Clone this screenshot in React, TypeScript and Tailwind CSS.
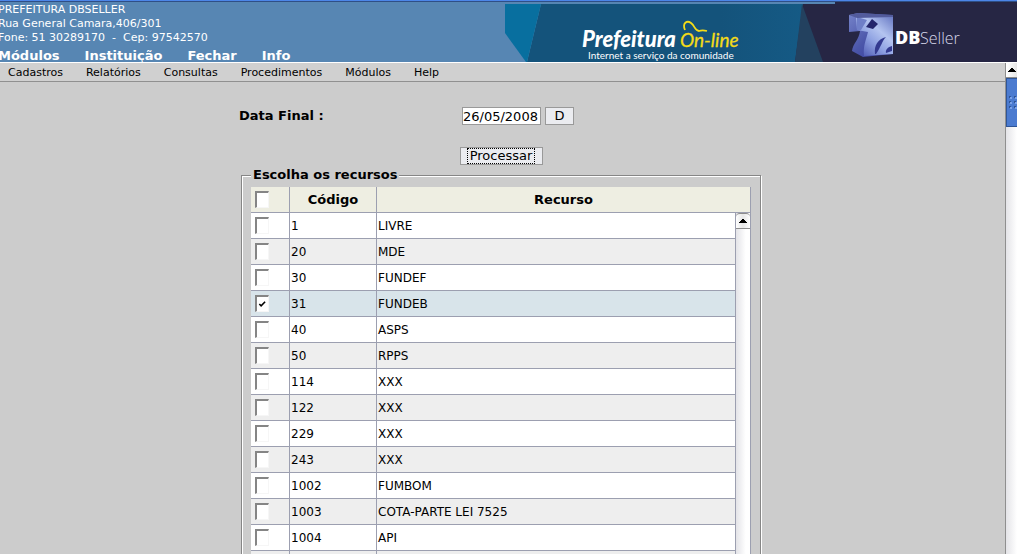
import React, { useState } from 'react';

type Resource = { code: string; name: string };

const resources: Resource[] = [
  { code: '1', name: 'LIVRE' },
  { code: '20', name: 'MDE' },
  { code: '30', name: 'FUNDEF' },
  { code: '31', name: 'FUNDEB' },
  { code: '40', name: 'ASPS' },
  { code: '50', name: 'RPPS' },
  { code: '114', name: 'XXX' },
  { code: '122', name: 'XXX' },
  { code: '229', name: 'XXX' },
  { code: '243', name: 'XXX' },
  { code: '1002', name: 'FUMBOM' },
  { code: '1003', name: 'COTA-PARTE LEI 7525' },
  { code: '1004', name: 'API' },
];

const modules = ['Módulos', 'Instituição', 'Fechar', 'Info'];
const menus = ['Cadastros', 'Relatórios', 'Consultas', 'Procedimentos', 'Módulos', 'Help'];

function Banner() {
  return (
    <svg className="block h-[60px] w-[512px] shrink-0" viewBox="0 2 512 60" role="img" aria-label="Prefeitura On-line, DBSeller">
      <defs>
        <linearGradient id="sea" x1="0" x2="1">
          <stop offset="0" stopColor="#14537b" />
          <stop offset="0.7" stopColor="#14537b" />
          <stop offset="1" stopColor="#155a85" />
        </linearGradient>
        <linearGradient id="front" x1="0.1" y1="1" x2="0.9" y2="0">
          <stop offset="0" stopColor="#4a55b0" />
          <stop offset="0.4" stopColor="#8fa2e2" />
          <stop offset="0.65" stopColor="#b4c4f0" />
          <stop offset="1" stopColor="#6f80c8" />
        </linearGradient>
        <linearGradient id="side" x1="0" y1="0" x2="1" y2="1">
          <stop offset="0" stopColor="#7583c9" />
          <stop offset="0.5" stopColor="#4b56aa" />
          <stop offset="1" stopColor="#34389a" />
        </linearGradient>
      </defs>
      <rect x="0" y="2" width="512" height="60" fill="#5786b3" />
      <path d="M330 2H512V62H290V4H330Z" fill="#262644" />
      <path d="M36 4H298L290 62H22Z" fill="url(#sea)" />
      <path d="M0 4H36L22 62H21L0 33Z" fill="#086f9f" />
      <path d="M297 4L318 62H290Z" fill="#23415f" />
      <text x="77" y="47" fontFamily="Lato, sans-serif" fontSize="22" fontWeight="900" fontStyle="italic" fill="#fff">Prefeitura</text>
      <text x="175" y="47" fontFamily="Lato, sans-serif" fontSize="19" fontStyle="italic" fill="#f5dc18" stroke="#f5dc18" strokeWidth="0.3">On-line</text>
      <path d="M180 30C177 23 182 20 186 23C190 26 190 31 194 31C197 30 198 30 202 31" fill="none" stroke="#f5dc18" strokeWidth="1.8" />
      <text x="83" y="59" fontFamily="Lato, sans-serif" fontSize="10" fill="#fff">Internet a serviço da comunidade</text>

      <path d="M344 15L353 13L388 15V54L358 57L347 51C348 43 354 40 355 31L344 32Z" fill="url(#side)" />
      <path d="M351 17L388 16V54L359 56C358 46 361 40 363 32L352 30Z" fill="url(#front)" />
      <path d="M352 17L362 20L356 30L352 30Z" fill="#6f7fc8" />
      <path d="M367 19L373 24L368 29L361 27Z" fill="#25266c" />
      <path d="M344 15L353 13L388 15V17L352 18Z" fill="#525b9c" />
      <path d="M370 54C369 45 373 39 381 37C377 41 376 47 371 54Z" fill="#333a90" />
      <path d="M381 53C380 50 383 47 387 46V51Z" fill="#333a90" />
      <text x="390" y="44" fontFamily="'Open Sans', sans-serif" fontSize="18" fontWeight="800" fill="#fff">DB</text>
      <text x="415" y="44" fontFamily="'Open Sans', sans-serif" fontSize="16" fontWeight="300" fill="#d8d8ea">Seller</text>
    </svg>
  );
}

function UpArrow() {
  return (
    <svg className="h-1 w-2 shrink-0" viewBox="0 0 8 4" aria-hidden="true" shapeRendering="crispEdges">
      <path d="M3 0h2v1h1v1h1v1h1v1H0V3h1V2h1V1h1z" fill="#000" />
    </svg>
  );
}

function Check({ label, checked, onChange }: { label: string; checked: boolean; onChange: () => void }) {
  return (
    <span className="ml-1 grid h-[17px] w-[14px]">
      <input
        type="checkbox"
        aria-label={label}
        checked={checked}
        onChange={onChange}
        className="col-start-1 row-start-1 m-0 h-[17px] w-[14px] appearance-none border-t-2 border-r border-b border-l-2 border-t-[#858585] border-r-[#f6f6f6] border-b-[#f6f6f6] border-l-[#858585] bg-white"
      />
      {checked && (
        <svg className="pointer-events-none col-start-1 row-start-1 place-self-center" width="8" height="8" viewBox="0 0 9 9" aria-hidden="true">
          <path d="M1.5 4.5L3.5 6.5L8 2" fill="none" stroke="#000" strokeWidth="1.8" />
        </svg>
      )}
    </span>
  );
}

export default function App() {
  const [date, setDate] = useState('26/05/2008');
  const [selected, setSelected] = useState<string[]>(['31']);
  const all = selected.length === resources.length;
  const toggle = (code: string) =>
    setSelected((s) => (s.includes(code) ? s.filter((c) => c !== code) : [...s, code]));

  return (
    <div className="flex h-screen flex-col overflow-hidden bg-[#cccccc] font-['DejaVu_Sans',sans-serif] text-xs text-black">
      <header className="flex h-[63px] shrink-0 flex-col border-b border-white bg-[#5786b3] text-white">
        <div className="h-0.5 shrink-0 border-b border-[#2f4f86] bg-[#4c86e8]" />
        <div className="flex min-h-0 flex-1">
          <div className="-ml-0.5 flex min-w-0 flex-1 flex-col pt-px whitespace-nowrap">
            <address className="text-[11px] leading-[14px] not-italic">
              <p>PREFEITURA DBSELLER</p>
              <p>Rua General Camara,406/301</p>
              <p className="whitespace-pre">Fone: 51 30289170  -  Cep: 97542570</p>
            </address>
            <nav className="mt-[3px] flex gap-[25px] text-[13px] leading-4 font-bold" aria-label="Principal">
              {modules.map((m) => (
                <a key={m} href="#">{m}</a>
              ))}
            </nav>
          </div>
          <Banner />
        </div>
      </header>

      <div className="flex min-h-0 flex-1">
        <div className="flex min-w-0 flex-1 flex-col overflow-hidden">
          <nav className="flex h-[19px] shrink-0 gap-[23px] border-b border-[#909090] bg-[#d0d0d0] pt-px pl-2 text-[11px] leading-[18px]" aria-label="Menu">
            {menus.map((m) => (
              <a key={m} href="#">{m}</a>
            ))}
          </nav>

          <main className="flex flex-col items-center pt-[25px] pr-[3px]">
            <form className="flex w-[524px] flex-col" onSubmit={(e) => e.preventDefault()}>
              <div className="flex h-[18px] items-center">
                <label htmlFor="end-date" className="w-[223px] text-[13px] font-bold">Data Final :</label>
                <input
                  id="end-date"
                  value={date}
                  onChange={(e) => setDate(e.target.value)}
                  className="h-[18px] w-[79px] border border-[#999999] bg-white text-[13px]"
                />
                <button type="button" className="ml-1 h-[18px] w-[29px] border border-[#999999] bg-[#ebecf0] text-[13px] leading-4">D</button>
              </div>
              <button type="submit" className="mt-[22px] flex h-[18px] w-[83px] justify-center self-center border border-[#999999] bg-[#ebecf0] text-[13px] leading-4">
                <span className="border border-dotted border-black px-0.5 leading-[14px]">Processar</span>
              </button>
            </form>

            <fieldset className="mt-0.5 w-[520px] border border-[#868686] px-[9px] pb-2 shadow-[1px_1px_0_#ffffff,inset_1px_1px_0_#ffffff]">
              <legend className="bg-[#cccccc] px-0.5 text-[13px] leading-4 font-bold">Escolha os recursos</legend>
              <table className="mt-1 w-full table-fixed border-separate border-spacing-0 text-left">
                <colgroup>
                  <col className="w-[39px]" />
                  <col className="w-[87px]" />
                  <col />
                  <col className="w-[15px]" />
                </colgroup>
                <thead>
                  <tr className="h-[26px] bg-[#eeeee2] text-[13px] [&>th]:border-r [&>th]:border-b [&>th]:border-[#9c9fb0] [&>th]:p-0">
                    <th>
                      <Check label="Todos" checked={all} onChange={() => setSelected(all ? [] : resources.map((r) => r.code))} />
                    </th>
                    <th className="text-center">Código</th>
                    <th colSpan={2} className="text-center">Recurso</th>
                  </tr>
                </thead>
                <tbody>
                  {resources.map((r, i) => {
                    const on = selected.includes(r.code);
                    const tone = on ? 'bg-[#d8e4ea]' : i % 2 ? 'bg-[#eeeeee]' : 'bg-white';
                    return (
                      <tr key={r.code} className={`h-[26px] ${tone} [&>td]:border-r [&>td]:border-[#9c9fb0] [&>td]:py-0`}>
                        <td className="border-b p-0">
                          <Check label={r.name} checked={on} onChange={() => toggle(r.code)} />
                        </td>
                        <td className="border-b px-px">{r.code}</td>
                        <td className="border-b px-px">{r.name}</td>
                        {i === 0 && (
                          <td rowSpan={resources.length + 1} className="bg-linear-to-r from-[#e4e4e8] to-white to-70% p-0 align-top">
                            <button type="button" aria-label="Rolar para cima" className="flex h-4 w-full items-center justify-center rounded-t-sm border-t border-b border-[#8c8c8c] bg-linear-to-r from-white via-[#e6e6e6] to-white">
                              <UpArrow />
                            </button>
                          </td>
                        )}
                      </tr>
                    );
                  })}
                  <tr className="h-[26px] bg-[#eeeeee] [&>td]:border-r [&>td]:border-[#9c9fb0]">
                    <td />
                    <td />
                    <td />
                  </tr>
                </tbody>
              </table>
            </fieldset>
          </main>
        </div>

        <aside className="flex w-3 shrink-0 flex-col overflow-hidden border-l border-[#8f8f8f] bg-linear-to-r from-[#e4e4e8] to-white" aria-label="Barra de rolagem">
          <button type="button" aria-label="Subir" className="flex h-[15px] shrink-0 items-center justify-end border-b border-[#8c8c8c] bg-linear-to-r from-white to-[#e6e6e6] pr-px">
            <UpArrow />
          </button>
          <div className="flex h-[49px] shrink-0 items-center justify-end border-y border-l border-[#2f5596] bg-[#4b7bd0]">
            <svg width="8" height="13" viewBox="0 0 8 13" aria-hidden="true">
              {[0, 5, 10].map((y) => (
                <g key={y}>
                  <path d={`M0 ${y}h2v2h-2zM5 ${y}h2v2h-2z`} fill="#2f5596" />
                  <path d={`M1 ${y + 1}h2v2h-2zM6 ${y + 1}h2v2h-2z`} fill="#7ba2e8" />
                </g>
              ))}
            </svg>
          </div>
        </aside>
      </div>
    </div>
  );
}
